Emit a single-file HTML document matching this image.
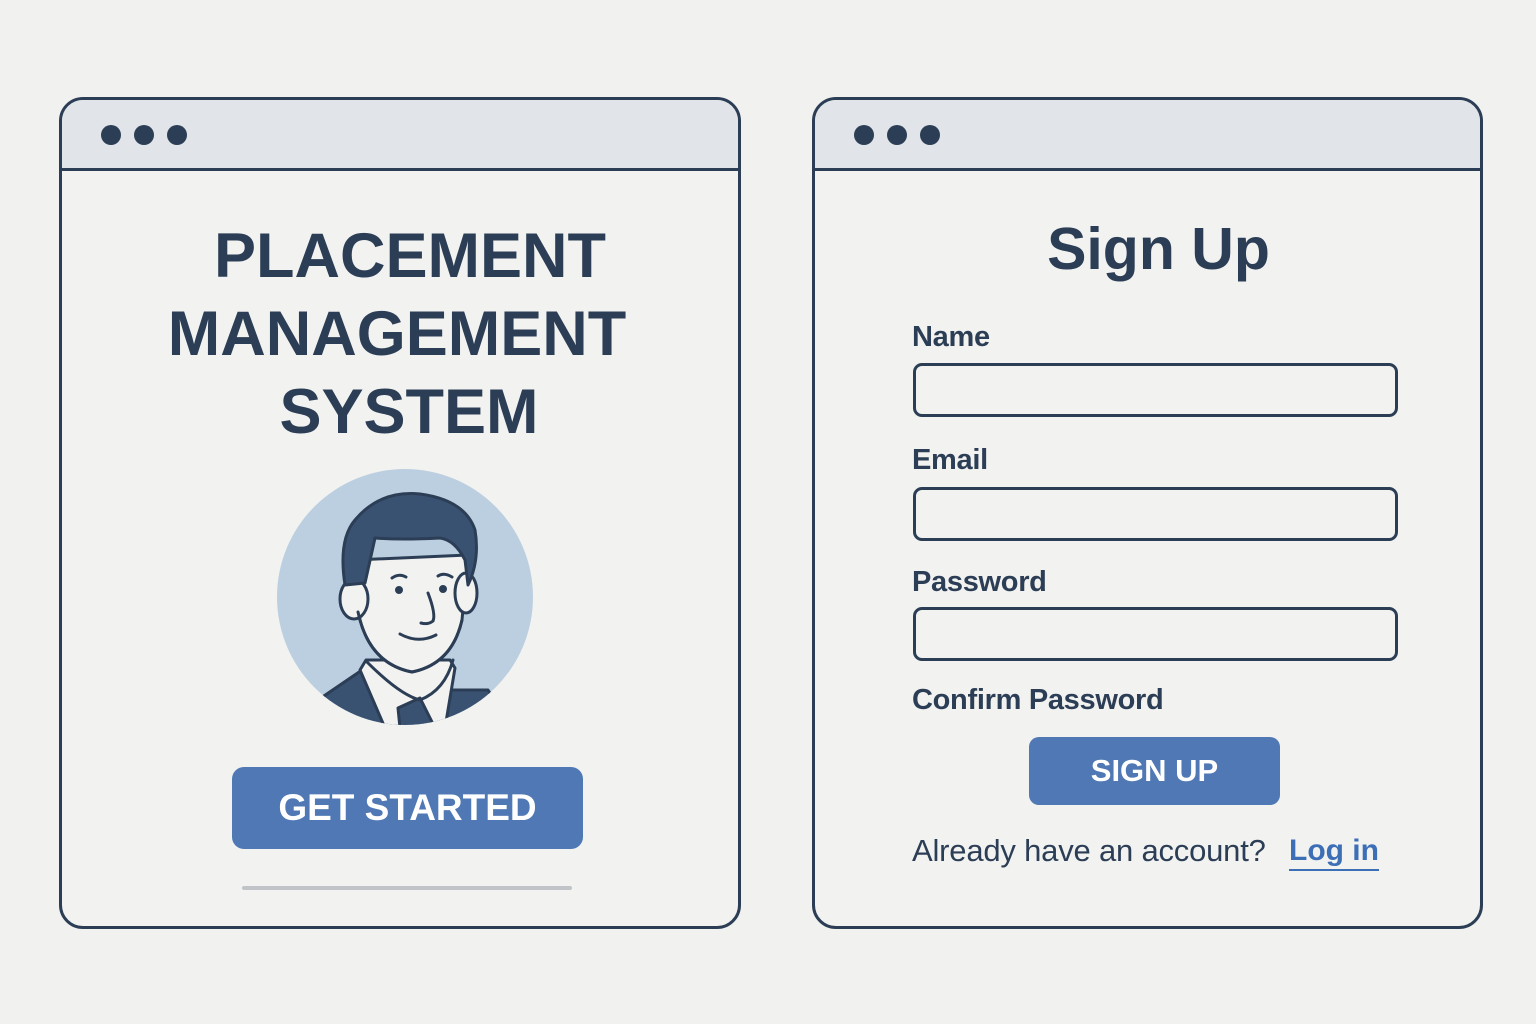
<!DOCTYPE html>
<html><head><meta charset="utf-8"><style>
*{margin:0;padding:0;box-sizing:border-box}
body{width:1536px;height:1024px;background:#f1f1f0;position:relative;overflow:hidden;font-family:"Liberation Sans",sans-serif;color:#2c3e55}
.win{position:absolute;top:97px;height:832px;border:3px solid #2c3e55;border-radius:24px;overflow:hidden;background:#f2f2f1}
.hdr{height:71px;background:#e1e4e9;border-bottom:3px solid #2c3e55;position:relative}
.dot{position:absolute;top:25px;width:20px;height:20px;border-radius:50%;background:#2c3e55}
.abs{position:absolute}
.t{position:absolute;white-space:nowrap}
.inp{position:absolute;left:98px;width:485px;height:54px;border:3px solid #2c3e55;border-radius:9px}
.lbl{position:absolute;left:97px;font-size:29px;font-weight:bold;letter-spacing:-0.3px}
</style></head><body>
<div class="win" style="left:59px;width:682px">
 <div class="hdr"><div class="dot" style="left:39px"></div><div class="dot" style="left:72px"></div><div class="dot" style="left:105px"></div></div>
 <div class="t" style="left:0;width:670px;top:117px;text-align:center;font-size:63px;font-weight:bold;line-height:78px">
  <div style="position:relative;left:13px">PLACEMENT</div><div>MANAGEMENT</div><div style="position:relative;left:12px">SYSTEM</div></div>
 <div class="abs" style="left:170px;top:667px;width:351px;height:82px;background:#4f78b4;border-radius:12px;color:#fff;font-size:37px;font-weight:bold;text-align:center;line-height:82px">GET STARTED</div>
 <div class="abs" style="left:180px;top:786px;width:330px;height:4px;background:#c0c4c9;border-radius:2px"></div>
</div>
<svg class="abs" style="left:0;top:0" width="1536" height="1024">
 <defs><clipPath id="c"><circle cx="405" cy="597" r="128"/></clipPath></defs>
 <circle cx="405" cy="597" r="128" fill="#bccfe0"/>
 <g clip-path="url(#c)" stroke="#2c3e55" stroke-width="3" stroke-linejoin="round" stroke-linecap="round">
  <path d="M318,700 L365,668 L440,690 L488,690 L520,740 L300,740 Z" fill="#3a5272"/>
  <path d="M366,660 L360,670 L385,728 L445,728 L455,668 L450,660 Z" fill="#f2f2f1"/>
  <path d="M398,708 L420,698 L435,728 L400,728 Z" fill="#3a5272"/>
  <path d="M367,662 Q400,695 420,700 Q445,690 453,660" fill="none"/>
  <path d="M355,560 L360,620 Q372,664 412,672 Q452,664 462,620 L468,555 Z" fill="#f2f2f1"/>
  <ellipse cx="354" cy="599" rx="14" ry="20" fill="#f2f2f1"/>
  <ellipse cx="466" cy="593" rx="11" ry="20" fill="#f2f2f1"/>
  <path d="M358,612 L360,620 Q372,664 412,672 Q452,664 462,620" fill="none"/>
  <path d="M345,585 Q338,540 355,520 Q380,490 420,494 Q465,500 475,530 Q480,560 468,585 L465,560 Q455,540 440,538 Q400,540 375,538 L365,583 Z" fill="#3a5272"/>
  <path d="M392,578 Q399,573 406,577 M438,576 Q444,572 452,577" fill="none"/>
  <circle cx="399" cy="590" r="2.5" fill="#2c3e55"/><circle cx="443" cy="589" r="2.5" fill="#2c3e55"/>
  <path d="M428,593 Q436,614 433,621 Q428,625 421,623" fill="none"/>
  <path d="M400,634 Q418,644 436,635" fill="none"/>
 </g>
</svg>
<div class="win" style="left:812px;width:671px">
 <div class="hdr"><div class="dot" style="left:39px"></div><div class="dot" style="left:72px"></div><div class="dot" style="left:105px"></div></div>
 <div class="t" style="left:8px;width:671px;top:115px;text-align:center;font-size:59px;font-weight:bold">Sign Up</div>
 <div class="lbl" style="top:221px">Name</div>
 <div class="inp" style="top:263px"></div>
 <div class="lbl" style="top:344px">Email</div>
 <div class="inp" style="top:387px"></div>
 <div class="lbl" style="top:466px">Password</div>
 <div class="inp" style="top:507px"></div>
 <div class="lbl" style="top:584px">Confirm Password</div>
 <div class="abs" style="left:214px;top:637px;width:251px;height:68px;background:#4f78b4;border-radius:10px;color:#fff;font-size:31px;font-weight:bold;text-align:center;line-height:68px">SIGN UP</div>
 <div class="t" style="left:97px;top:733px;font-size:31px;letter-spacing:-0.2px">Already have an account?</div>
 <div class="t" style="left:474px;top:733px;font-size:30px;font-weight:bold;color:#3d6fb6;border-bottom:2px solid #3d6fb6;line-height:36px">Log in</div>
</div>
</body></html>
